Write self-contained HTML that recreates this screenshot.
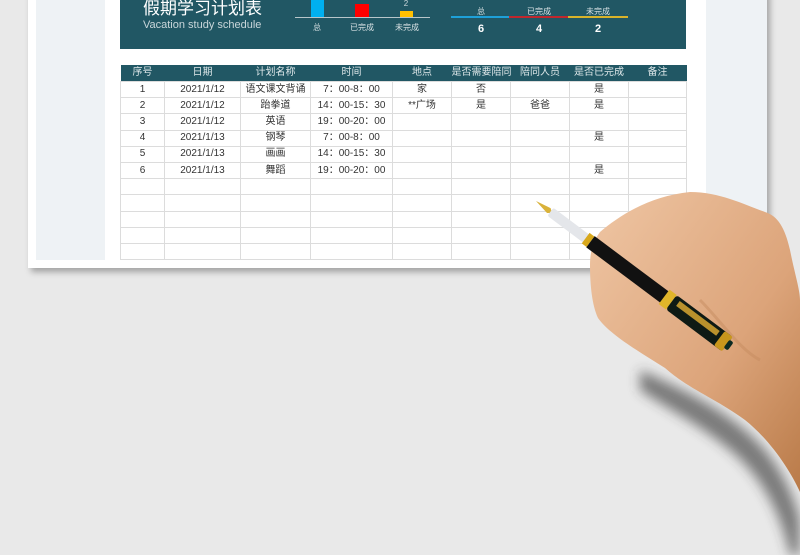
<!DOCTYPE html>
<html><head><meta charset="utf-8"><style>
*{margin:0;padding:0;box-sizing:border-box}
body{width:800px;height:555px;overflow:hidden;background:#e9e9e9;position:relative;font-family:"Liberation Sans","Noto Sans CJK SC",sans-serif}
.card{position:absolute;left:28px;top:-10px;width:739px;height:278px;background:#fff;box-shadow:3px 4px 6px rgba(0,0,0,.3)}
.pale{position:absolute;left:36px;top:0;width:731px;height:260px;background:#eef2f5}
.paper{position:absolute;left:105px;top:0;width:601px;height:260px;background:#fff}
.band{position:absolute;left:120px;top:0;width:566px;height:49px;background:#215764}
.t{position:absolute;white-space:nowrap}
.clip{position:absolute;left:120px;top:65px;width:567px;height:195px;overflow:hidden}
table{width:567px;border-collapse:collapse;table-layout:fixed;font-size:10px;color:#333}
th{background:#215764;color:#dfe8ea;font-weight:normal;height:16px;border:none;white-space:nowrap;font-size:10px;line-height:16px;padding:0;overflow:hidden}
td{height:16.2px;border:1px solid #dcdcdc;text-align:center;padding:0;line-height:14px;white-space:nowrap;overflow:hidden}
</style></head><body>
<div class="card"></div>
<div class="pale"></div>
<div class="paper"></div>
<div class="band"></div>
<div class="t" style="left:143px;top:-6px;font-size:17px;color:#fff">假期学习计划表</div>
<div class="t" style="left:143px;top:19px;font-size:11px;color:#c9d6da">Vacation study schedule</div>
<svg style="position:absolute;left:0;top:0" width="800" height="50">
<rect x="311" y="0" width="13" height="17" fill="#00b0f0"/>
<rect x="355" y="4" width="14" height="13" fill="#ff0000"/>
<rect x="400" y="11" width="13" height="6" fill="#ffc000"/>
<line x1="295" y1="17.5" x2="430" y2="17.5" stroke="#b8c6ca" stroke-width="1"/>
<text x="406" y="6" font-size="8" fill="#c9d6da" text-anchor="middle" font-family="Liberation Sans">2</text>
<g font-size="8" fill="#d6e0e3" text-anchor="middle" font-family="Liberation Sans,Noto Sans CJK SC,sans-serif">
<text x="317" y="30">总</text><text x="362" y="30">已完成</text><text x="407" y="30">未完成</text>
<text x="481" y="14">总</text><text x="539" y="14">已完成</text><text x="598" y="14">未完成</text>
</g>
<rect x="451" y="16" width="58" height="2" fill="#1ea0d8"/>
<rect x="509" y="16" width="59" height="2" fill="#c0272d"/>
<rect x="568" y="16" width="60" height="2" fill="#d8b32a"/>
<g font-size="11" fill="#fff" text-anchor="middle" font-weight="bold" font-family="Liberation Sans"><text x="481" y="32">6</text><text x="539" y="32">4</text><text x="598" y="32">2</text></g>
</svg>
<div class="clip"><table>
<colgroup><col style="width:44px"><col style="width:76px"><col style="width:70px"><col style="width:82px"><col style="width:59px"><col style="width:59px"><col style="width:59px"><col style="width:59px"><col style="width:58px"></colgroup>
<tr><th>序号</th><th>日期</th><th>计划名称</th><th>时间</th><th>地点</th><th>是否需要陪同</th><th>陪同人员</th><th>是否已完成</th><th>备注</th></tr>
<tr><td>1</td><td>2021/1/12</td><td>语文课文背诵</td><td>7：00-8：00</td><td>家</td><td>否</td><td></td><td>是</td><td></td></tr>
<tr><td>2</td><td>2021/1/12</td><td>跆拳道</td><td>14：00-15：30</td><td>**广场</td><td>是</td><td>爸爸</td><td>是</td><td></td></tr>
<tr><td>3</td><td>2021/1/12</td><td>英语</td><td>19：00-20：00</td><td></td><td></td><td></td><td></td><td></td></tr>
<tr><td>4</td><td>2021/1/13</td><td>钢琴</td><td>7：00-8：00</td><td></td><td></td><td></td><td>是</td><td></td></tr>
<tr><td>5</td><td>2021/1/13</td><td>画画</td><td>14：00-15：30</td><td></td><td></td><td></td><td></td><td></td></tr>
<tr><td>6</td><td>2021/1/13</td><td>舞蹈</td><td>19：00-20：00</td><td></td><td></td><td></td><td>是</td><td></td></tr>
<tr><td></td><td></td><td></td><td></td><td></td><td></td><td></td><td></td><td></td></tr>
<tr><td></td><td></td><td></td><td></td><td></td><td></td><td></td><td></td><td></td></tr>
<tr><td></td><td></td><td></td><td></td><td></td><td></td><td></td><td></td><td></td></tr>
<tr><td></td><td></td><td></td><td></td><td></td><td></td><td></td><td></td><td></td></tr>
<tr><td></td><td></td><td></td><td></td><td></td><td></td><td></td><td></td><td></td></tr>
</table></div>
<svg style="position:absolute;left:0;top:0" width="800" height="555">
<defs>
<filter id="bl" x="-50%" y="-50%" width="200%" height="200%"><feGaussianBlur stdDeviation="6"/></filter>
<linearGradient id="sk" x1="0" y1="0" x2="1" y2="1"><stop offset="0" stop-color="#efc6a4"/><stop offset=".6" stop-color="#dca47a"/><stop offset="1" stop-color="#b97a48"/></linearGradient>
</defs>
<path d="M640 370 C690 392 735 415 765 450 C785 475 795 500 800 520 L800 555 L790 555 C780 510 760 475 730 450 C700 425 670 410 640 390Z" fill="#333" opacity=".6" filter="url(#bl)"/>
<path d="M600 232 C620 215 650 196 690 192 C720 192 745 205 765 212 C778 216 785 228 790 250 C795 275 800 290 800 300 L800 492 C790 470 770 440 745 420 C715 398 690 390 665 368 C640 352 610 335 598 318 C592 305 590 285 590 265 C590 250 594 240 600 232Z" fill="url(#sk)"/>
<path d="M700 300 C720 320 740 350 760 360" stroke="#c68c60" stroke-width="3" fill="none" opacity=".5"/>
<g transform="translate(536,201) rotate(36.8)">
<path d="M0 0 L16 -3 L20 0 L16 3Z" fill="#d9b23a"/>
<rect x="18" y="-5" width="48" height="10" rx="2" fill="#e4e6ea"/>
<rect x="62" y="-6.5" width="6" height="13" fill="#d8a81c"/>
<rect x="68" y="-7" width="94" height="14" fill="#111"/>
<rect x="160" y="-9" width="9" height="18" fill="#e0b52a"/>
<rect x="169" y="-9" width="70" height="18" rx="3" fill="#0e1a14"/>
<rect x="175" y="-6" width="50" height="6" fill="#b9912c"/>
<rect x="229" y="-9" width="10" height="18" rx="2" fill="#c8961c"/>
<rect x="238" y="-5" width="5" height="10" rx="2" fill="#0b2a22"/>
</g>
</svg>
</body></html>
